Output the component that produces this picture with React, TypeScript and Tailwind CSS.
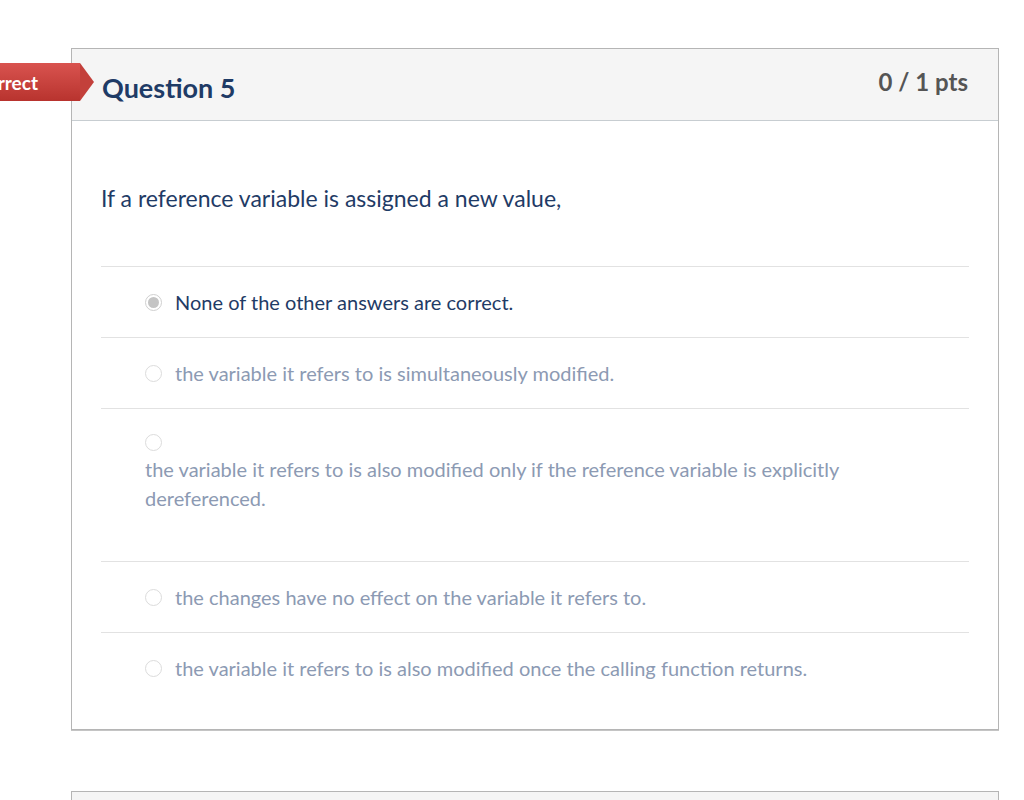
import React from 'react';

const answers = [
  { text: 'None of the other answers are correct.', selected: true, wrap: false },
  { text: 'the variable it refers to is simultaneously modified.', selected: false, wrap: false },
  {
    text: 'the variable it refers to is also modified only if the reference variable is explicitly dereferenced.',
    selected: false,
    wrap: true,
  },
  { text: 'the changes have no effect on the variable it refers to.', selected: false, wrap: false },
  { text: 'the variable it refers to is also modified once the calling function returns.', selected: false, wrap: false },
];

const Radio = ({ selected }: { selected: boolean }) => (
  <span
    className={`inline-flex w-[17px] h-[17px] rounded-full shrink-0 items-center justify-center border ${
      selected ? 'border-[#d0d0d0] bg-white' : 'border-[#dcdcdc] bg-white'
    }`}
  >
    {selected && <span className="w-[11px] h-[11px] rounded-full bg-[#c4c4c4]" />}
  </span>
);

export default function App() {
  return (
    <div className="h-[800px] bg-white overflow-hidden" style={{ fontFamily: 'Lato, "Open Sans", sans-serif' }}>
      <div className="pt-[48px] pl-[71px] w-[999px]">
        {/* Question card */}
        <div className="relative border border-[#b5b5b5] shadow-[0_1px_0_#c4c4c4]">
          {/* Incorrect tag */}
          <div className="absolute left-[-142px] top-[14px] h-[38px] flex">
            <div className="h-full w-[150px] bg-gradient-to-b from-[#d9534f] to-[#b8332e] flex items-center justify-end pr-[42px] rounded-l-sm">
              <span className="text-white font-bold text-[19px] leading-none">Incorrect</span>
            </div>
            <div className="w-0 h-0 border-t-[19px] border-b-[19px] border-l-[14px] border-t-transparent border-b-transparent border-l-[#c3403b]" />
          </div>

          {/* Header */}
          <div className="h-[72px] bg-[#f5f5f5] border-b border-[#c7cdd1] flex items-center justify-between px-[30px]">
            <h2 className="text-[27px] font-bold text-[#1f3b66] mt-[8px]">Question 5</h2>
            <span className="text-[24px] font-bold text-[#555] -mt-[6px]">0 / 1 pts</span>
          </div>

          {/* Body */}
          <div className="px-[29px] pt-[63px] pb-[26px]">
            <p className="text-[23px] leading-[28px] text-[#1f3b66] pb-[54px] border-b border-[#e2e2e2]">
              If a reference variable is assigned a new value,
            </p>
            {answers.map((a, i) => (
              <div
                key={i}
                className={`pl-[44px] ${i < answers.length - 1 ? 'border-b border-[#e2e2e2]' : ''} ${
                  a.wrap ? 'pt-[21px] pb-[48px]' : 'pt-[21px] pb-[20px]'
                }`}
              >
                {a.wrap ? (
                  <div>
                    <div className="h-[25px] flex items-center">
                      <Radio selected={a.selected} />
                    </div>
                    <div className="text-[20px] leading-[29px] text-[#8c9ab3] max-w-[760px]">{a.text}</div>
                  </div>
                ) : (
                  <div className="flex items-center gap-[13px] h-[29px]">
                    <Radio selected={a.selected} />
                    <span className={`text-[20px] leading-[29px] ${a.selected ? 'text-[#1f3b66]' : 'text-[#8c9ab3]'}`}>
                      {a.text}
                    </span>
                  </div>
                )}
              </div>
            ))}
          </div>
        </div>

        {/* Next card */}
        <div className="mt-[61px] border border-[#b5b5b5] h-[80px] bg-[#f5f5f5]" />
      </div>
    </div>
  );
}
